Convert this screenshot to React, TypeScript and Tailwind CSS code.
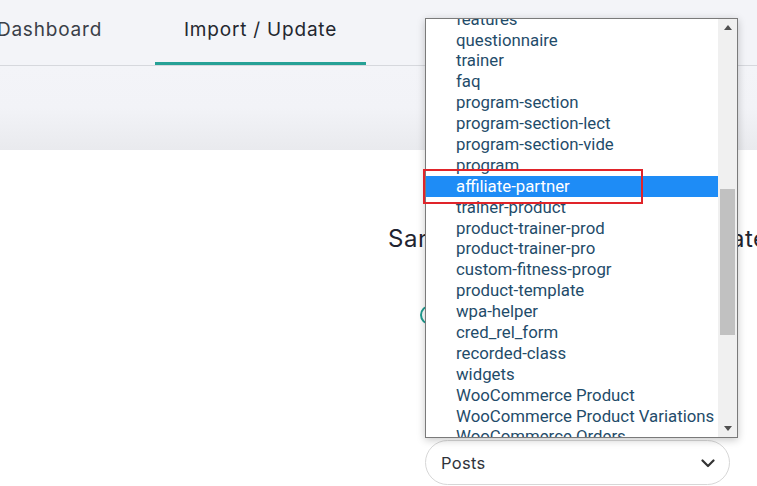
import React from 'react';

const options = [
  'features',
  'questionnaire',
  'trainer',
  'faq',
  'program-section',
  'program-section-lect',
  'program-section-vide',
  'program',
  'affiliate-partner',
  'trainer-product',
  'product-trainer-prod',
  'product-trainer-pro',
  'custom-fitness-progr',
  'product-template',
  'wpa-helper',
  'cred_rel_form',
  'recorded-class',
  'widgets',
  'WooCommerce Product',
  'WooCommerce Product Variations',
  'WooCommerce Orders',
];

const selected = 'affiliate-partner';

export default function App() {
  return (
    <div className="relative h-[486px] w-[757px] overflow-hidden bg-white font-['Inter',sans-serif]">
      {/* Header / tabs */}
      <header className="bg-[#f3f4f8]">
        <nav className="ml-[-56px] flex h-[66px] border-b border-[#d6d8dd]">
          <div className="flex w-[211px] items-center justify-center pb-[4px] text-[19px] tracking-[0.8px] text-[#3a3f48]">
            Dashboard
          </div>
          <div className="relative flex w-[211px] items-center justify-center pb-[4px] text-[19px] tracking-[0.8px] text-[#23272f]">
            Import / Update
            <span className="absolute bottom-0 left-0 right-0 h-[3px] bg-[#26a196]" />
          </div>
        </nav>
        <div className="h-[84px] bg-gradient-to-b from-[#f3f4f8] via-[#f2f3f7] to-[#e9eaee]" />
      </header>

      {/* Main */}
      <main className="flex flex-col pt-[73px]">
        <h2 className="ml-[388px] whitespace-nowrap text-[24px] leading-[32px] tracking-[0.5px] text-[#1f2430]">
          Sample Import Update Template
        </h2>
        <div className="ml-[420px] mt-[50px] h-[20px] w-[20px] rounded-full border-2 border-[#1f9c90]" />
        <div className="ml-[425px] mt-[115px] flex h-[45px] w-[305px] items-center justify-between rounded-full border border-[#d7d7d7] bg-white pl-[15px] pr-[14px] pt-[2px] text-[16.5px] tracking-[0.3px] text-[#30343b]">
          <span>Posts</span>
          <svg width="14" height="9" viewBox="0 0 14 9" fill="none">
            <path d="M1.5 1.5L7 7L12.5 1.5" stroke="#333" strokeWidth="2.2" strokeLinecap="round" strokeLinejoin="round" />
          </svg>
        </div>
      </main>

      {/* Open native-like listbox */}
      <div className="absolute left-[425px] top-[18px] flex h-[420px] w-[313px] border border-[#7a7a7a] bg-white shadow-[0_2px_8px_rgba(0,0,0,0.22)]">
        <div className="flex-1 overflow-hidden">
          <ul className="mt-[-10.2px] font-['Roboto',sans-serif] text-[16.8px]">
            {options.map((o) => (
              <li
                key={o}
                className={`flex h-[20.9px] items-center whitespace-nowrap pl-[30px] ${
                  o === selected ? 'bg-[#1e8cf6] text-white' : 'text-[#1f4c6a]'
                }`}
              >
                {o}
              </li>
            ))}
          </ul>
        </div>
        <div className="relative w-[19px] bg-[#f0f0f0]">
          <span className="absolute left-1/2 top-[6px] -translate-x-1/2 border-x-[4px] border-b-[5px] border-x-transparent border-b-[#4f4f4f]" />
          <span className="absolute left-[2px] right-[2px] top-[170px] h-[146px] bg-[#c1c1c1]" />
          <span className="absolute bottom-[6px] left-1/2 -translate-x-1/2 border-x-[4px] border-t-[5px] border-x-transparent border-t-[#4f4f4f]" />
        </div>
      </div>

      {/* Annotation box */}
      <div className="pointer-events-none absolute left-[423px] top-[169px] h-[35px] w-[220px] border-2 border-[#e0242a]" />
    </div>
  );
}
